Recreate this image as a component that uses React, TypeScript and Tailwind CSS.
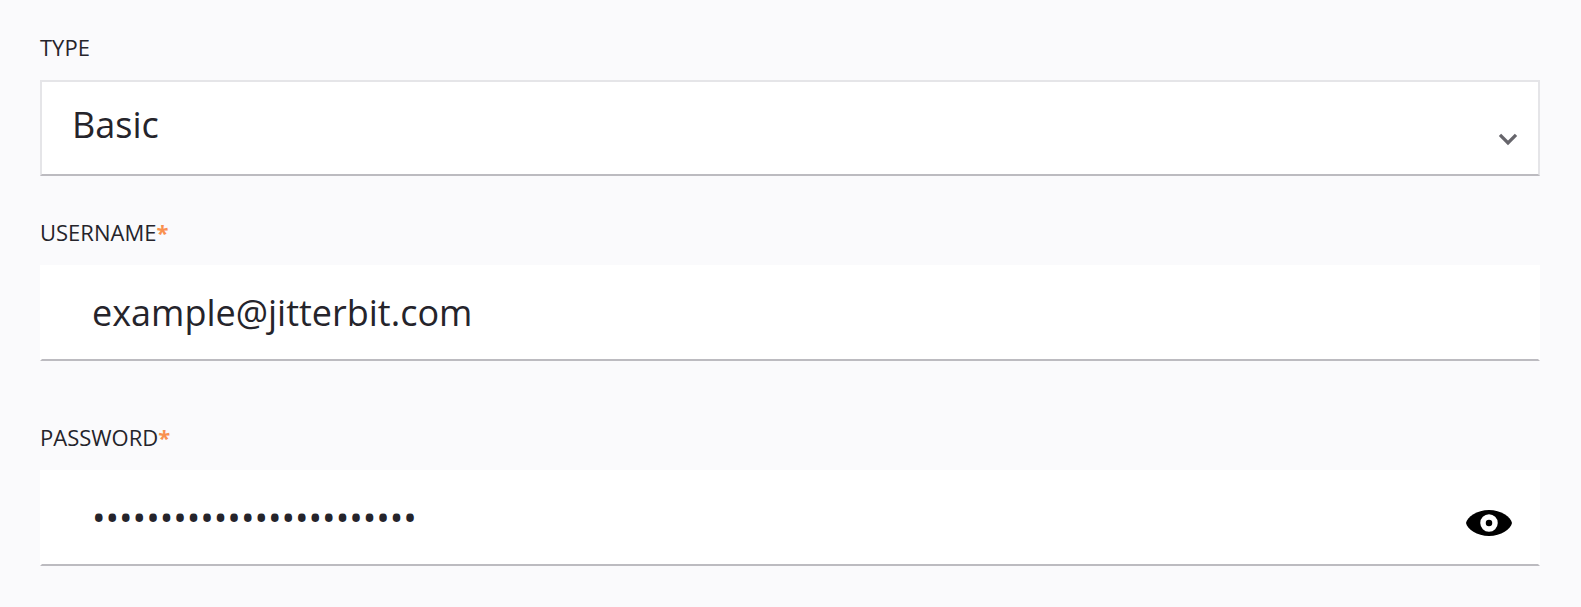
import React from 'react';

const Label: React.FC<{ text: string, required?: boolean }> = ({ text, required }) => (
    <label className="block h-[30px] text-[22px] leading-[30px]">
        {text}
        {required && <span className="font-bold text-[#f9904f]">*</span>}
    </label>
);

export default function App() {
  return (
    <div className="h-[607px] bg-[#fafafc] pl-10 pr-[41px] pt-8 text-[#25242b] font-['Open_Sans',sans-serif]">
      <Label text="TYPE" />
      <div className="mt-[18px] flex h-24 items-center justify-between border-2 border-[#e5e5e8] border-b-[#bcbbc0] bg-white pl-[30px] pr-5">
          <span className="pb-1.5 text-[36px]">Basic</span>
          <svg className="mt-6 h-5 w-5" viewBox="0 0 20 20" fill="none" stroke="#66656b" strokeWidth="3.3">
              <path d="M2 4.800l8 8 8-8" />
          </svg>
      </div>

      <div className="mt-[41px]">
          <Label text="USERNAME" required />
          <div className="mt-[18px] flex h-24 items-center border-2 border-white border-b-[#bcbbc0] bg-white px-[50px] text-[36px]">example@jitterbit.com</div>
      </div>

      <div className="mt-[61px]">
          <Label text="PASSWORD" required />
          <div className="mt-[18px] flex h-24 items-center justify-between border-2 border-white border-b-[#bcbbc0] bg-white pl-[50px] pr-[26px] text-[36px]">
              <span>{'•'.repeat(24)}</span>
              <svg className="mt-2.5 h-[26px] w-[46px]" viewBox="0 0 46 26">
                  <path d="M0 13C1 7 11 0 23 0s22 7 23 13c-1 6-11 13-23 13S1 19 0 13Z" />
                  <circle cx="23" cy="13" r="6" fill="none" stroke="#fff" strokeWidth="5.5" />
              </svg>
          </div>
      </div>
    </div>
  );
}
